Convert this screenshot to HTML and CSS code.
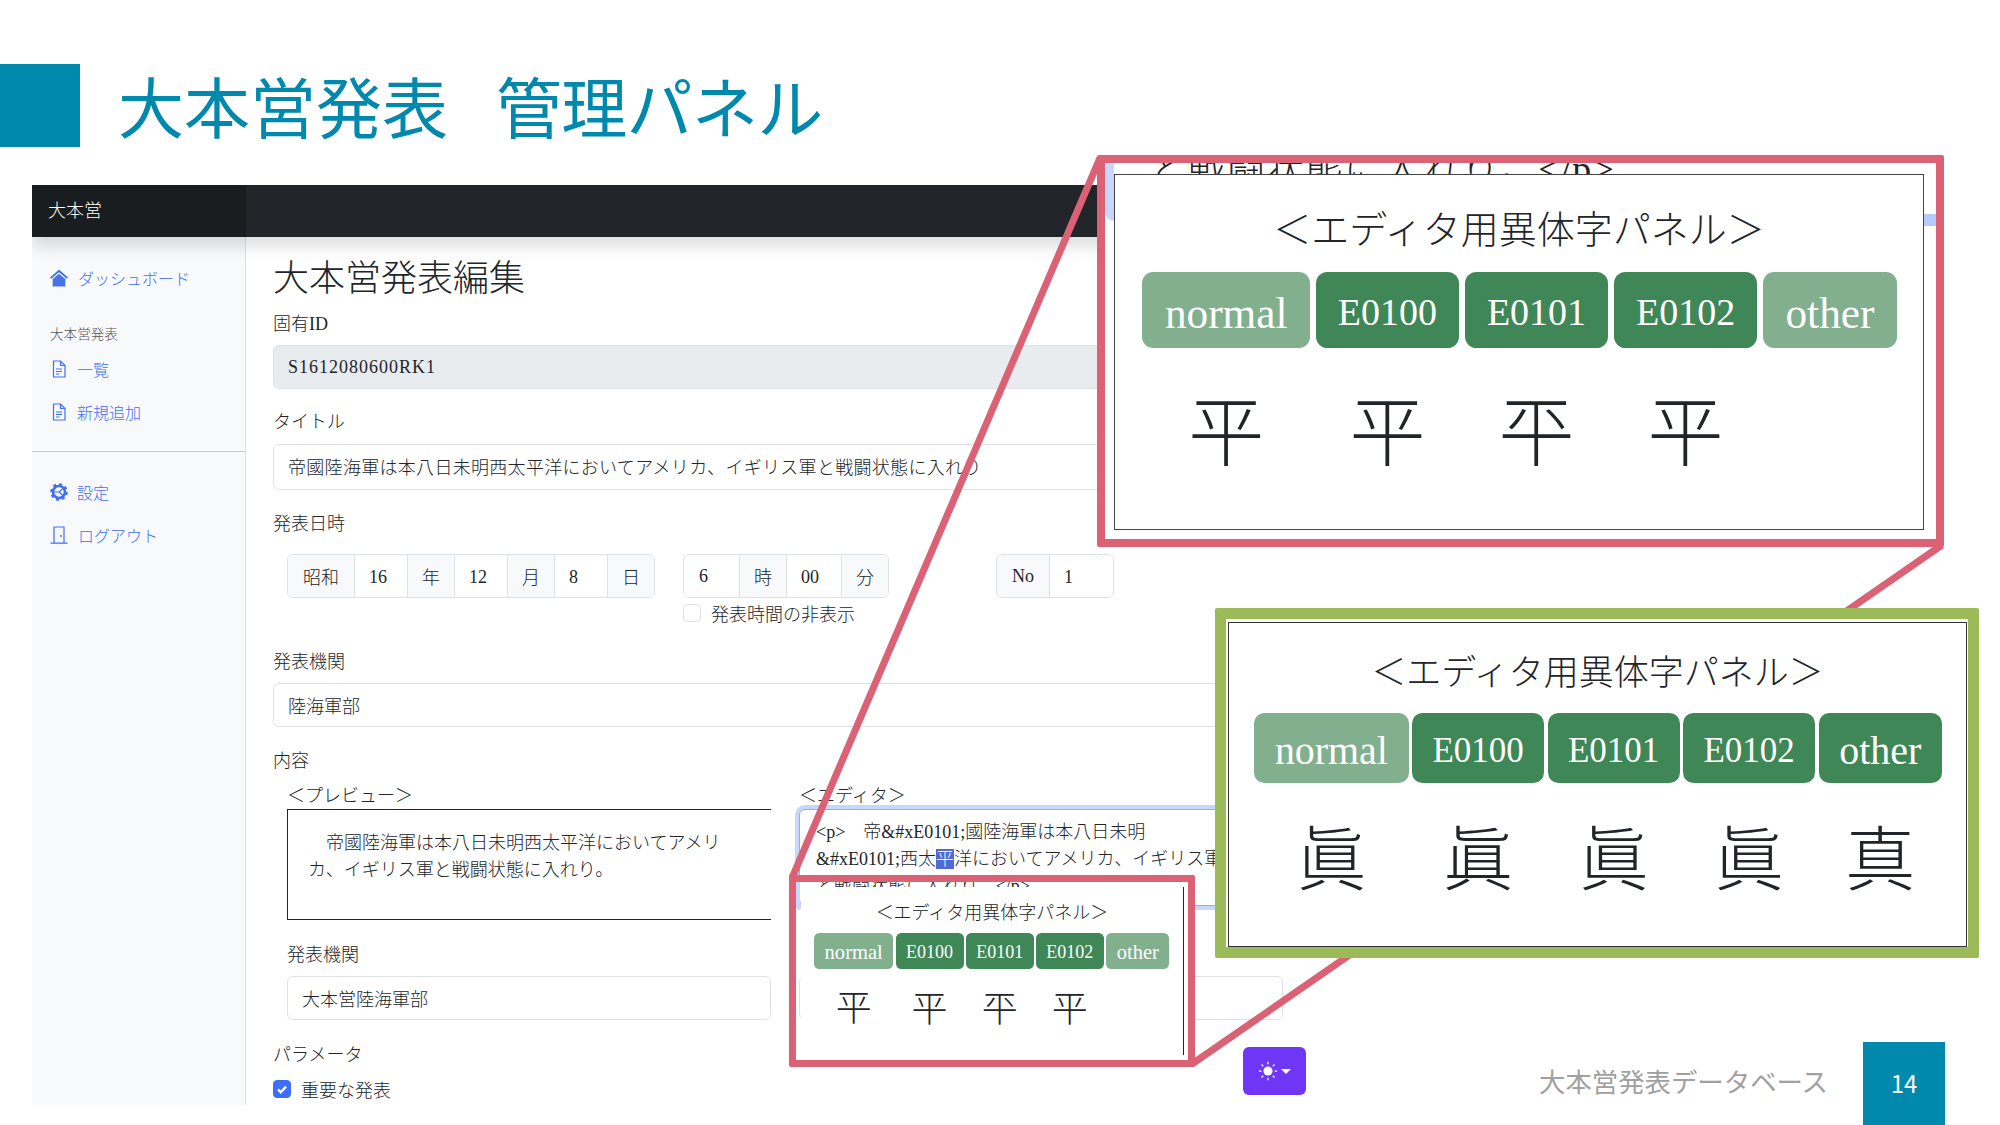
FILE: index.html
```html
<!DOCTYPE html>
<html lang="ja">
<head>
    <meta charset="UTF-8">
    <title>大本営発表 管理パネル</title>
    <link rel="stylesheet" href="styles.css">
</head>
<body>
<div class="slide">
    <header class="slide-head">
        <div class="head-mark"></div>
        <h1 class="slide-title">大本営発表<span class="title-gap">管理パネル</span></h1>
    </header>

    <div class="app">
        <div class="topbar"><div class="brand">大本営</div></div>
        <div class="app-body">
            <nav class="sidebar">
                <a class="nav-link nav-first">
                    <svg class="nav-icon" viewBox="0 0 17 16"><path d="M8.5 0L0 7.5l1.2 1.3 7.3-6.3 7.3 6.3L17 7.5z"/><path d="M8.5 4L2.5 9v7h12V9z"/></svg>
                    <span class="nav-text">ダッシュボード</span>
                </a>
                <div class="nav-heading">大本営発表</div>
                <a class="nav-link">
                    <svg class="nav-icon" viewBox="0 0 17 18"><path class="line" d="M3 1h7l4.500 4.500V17H3z"/><path class="line" d="M10 1v4.500h4.500M5.500 9h6M5.500 11.500h6M5.500 14h3.500"/></svg>
                    <span>一覧</span>
                </a>
                <a class="nav-link">
                    <svg class="nav-icon" viewBox="0 0 17 18"><path class="line" d="M3 1h7l4.500 4.500V17H3z"/><path class="line" d="M10 1v4.500h4.500M5.500 9h6M5.500 11.500h6M5.500 14h3.500"/></svg>
                    <span>新規追加</span>
                </a>
                <hr class="nav-rule">
                <a class="nav-link">
                    <svg class="nav-icon" viewBox="0 0 18 18"><circle class="thick" cx="9" cy="9" r="6"/><circle class="dots" cx="9" cy="9" r="7.800"/><path class="line" d="M9 9l3.500-3M9 9l3.500 3M9 9H4"/></svg>
                    <span>設定</span>
                </a>
                <a class="nav-link">
                    <svg class="nav-icon" viewBox="0 0 17 18"><path class="line" d="M3.500 17V1h10v16M0 17.200h17"/><circle cx="10.500" cy="10" r="1"/></svg>
                    <span class="nav-text">ログアウト</span>
                </a>
            </nav>

            <main class="main">
                <h2 class="page-title">大本営発表編集</h2>

                <div class="field field-id">
                    <label>固有ID</label>
                    <input class="control control-id" type="text" value="S1612080600RK1" disabled>
                </div>
                <div class="field">
                    <label class="label-title">タイトル</label>
                    <input class="control control-tall" type="text" value="帝國陸海軍は本八日未明西太平洋においてアメリカ、イギリス軍と戦闘状態に入れり">
                </div>
                <div class="field field-date">
                    <label class="label-date">発表日時</label>
                    <div class="date-row">
                        <div class="group">
                            <span class="cell cell-text">昭和</span>
                            <span class="cell cell-value">16</span>
                            <span class="cell cell-text">年</span>
                            <span class="cell cell-value">12</span>
                            <span class="cell cell-text">月</span>
                            <span class="cell cell-value">8</span>
                            <span class="cell cell-text">日</span>
                        </div>
                        <div class="time-col">
                            <div class="group">
                                <span class="cell cell-value cell-wide">6</span>
                                <span class="cell cell-text">時</span>
                                <span class="cell cell-value cell-wide">00</span>
                                <span class="cell cell-text">分</span>
                            </div>
                            <div class="check-row">
                                <span class="check"></span>
                                <span>発表時間の非表示</span>
                            </div>
                        </div>
                        <div class="group group-no">
                            <span class="cell cell-text">No</span>
                            <span class="cell cell-value cell-wider">1</span>
                        </div>
                    </div>
                </div>
                <div class="field">
                    <label>発表機関</label>
                    <input class="control" type="text" value="陸海軍部">
                </div>
                <div class="field field-tight">
                    <label>内容</label>
                    <div class="content-row">
                        <div class="content-col">
                            <div class="sub-label">＜プレビュー＞</div>
                            <div class="preview">　帝國陸海軍は本八日未明西太平洋においてアメリカ、イギリス軍と戦闘状態に入れり。</div>
                            <div class="sub-field">
                                <label>発表機関</label>
                                <input class="control" type="text" value="大本営陸海軍部">
                            </div>
                        </div>
                        <div class="content-col">
                            <div class="sub-label">＜エディタ＞</div>
                            <div class="editor">
                                &lt;p&gt;　帝&amp;#xE0101;國陸海軍は本八日未明<br>
                                &amp;#xE0101;西太<span class="selected">平</span>洋においてアメリカ、イギリス軍<br>
                                と戦闘状態に入れり。&lt;/p&gt;
                            </div>
                            <div class="sub-field">
                                <label>&nbsp;</label>
                                <input class="control" type="text">
                            </div>
                        </div>
                    </div>
                </div>
                <div class="field">
                    <label>パラメータ</label>
                    <div class="check-row check-on">
                        <span class="check">
                            <svg viewBox="0 0 20 20"><path d="M5 10.500l3.500 3.500L15 7"/></svg>
                        </span>
                        <span>重要な発表</span>
                    </div>
                </div>
            </main>
        </div>
    </div>

    <svg class="connectors" viewBox="0 0 2000 1125">
        <path d="M792 878L1100 158M1192 1064L1942 545"/>
    </svg>

    <!-- small panel, sits on top of the editor -->
    <div class="callout callout-small">
        <div class="ring-edge"></div>
        <div class="small-cover">
            <div class="vpanel vpanel-small">
                <div class="vpanel-title">＜エディタ用異体字パネル＞</div>
                <div class="variant-row">
                    <div class="variant"><div class="vbtn vbtn-muted vbtn-lower">normal</div><div class="vchar">平</div></div>
                    <div class="variant"><div class="vbtn">E0100</div><div class="vchar">平&#xE0100;</div></div>
                    <div class="variant"><div class="vbtn">E0101</div><div class="vchar">平&#xE0101;</div></div>
                    <div class="variant"><div class="vbtn">E0102</div><div class="vchar">平&#xE0102;</div></div>
                    <div class="variant"><div class="vbtn vbtn-muted vbtn-lower">other</div></div>
                </div>
            </div>
        </div>
    </div>

    <!-- enlarged copy of the small panel -->
    <div class="callout callout-big">
        <div class="big-strip"><div class="big-strip-text">と戦闘状態に入れり。&lt;/p&gt;</div></div>
        <div class="edge-left"></div>
        <div class="edge-right"></div>
        <div class="vpanel vpanel-big">
            <div class="vpanel-title">＜エディタ用異体字パネル＞</div>
            <div class="variant-row">
                <div class="variant"><div class="vbtn vbtn-muted vbtn-lower">normal</div><div class="vchar">平</div></div>
                <div class="variant"><div class="vbtn">E0100</div><div class="vchar">平&#xE0100;</div></div>
                <div class="variant"><div class="vbtn">E0101</div><div class="vchar">平&#xE0101;</div></div>
                <div class="variant"><div class="vbtn">E0102</div><div class="vchar">平&#xE0102;</div></div>
                <div class="variant"><div class="vbtn vbtn-muted vbtn-lower">other</div></div>
            </div>
        </div>
    </div>

    <div class="callout callout-green">
        <div class="vpanel vpanel-green">
            <div class="vpanel-title">＜エディタ用異体字パネル＞</div>
            <div class="variant-row">
                <div class="variant"><div class="vbtn vbtn-muted vbtn-lower">normal</div><div class="vchar">眞</div></div>
                <div class="variant"><div class="vbtn">E0100</div><div class="vchar">眞&#xE0100;</div></div>
                <div class="variant"><div class="vbtn">E0101</div><div class="vchar">眞&#xE0101;</div></div>
                <div class="variant"><div class="vbtn">E0102</div><div class="vchar">眞&#xE0102;</div></div>
                <div class="variant"><div class="vbtn vbtn-lower">other</div><div class="vchar">真</div></div>
            </div>
        </div>
    </div>

    <div class="theme-btn">
        <svg class="sun" viewBox="0 0 24 24"><circle cx="12" cy="12" r="5.500"/><path d="M12 1v3M12 20v3M1 12h3M20 12h3M4.200 4.200l2.100 2.100M17.700 17.700l2.100 2.100M4.200 19.800l2.100-2.100M17.700 6.300l2.100-2.100"/></svg>
        <span class="caret"></span>
    </div>

    <footer class="slide-foot">
        <span class="foot-text">大本営発表データベース</span>
        <span class="page-no">14</span>
    </footer>
</div>
</body>
</html>
```

FILE: styles.css
```css
* {
    box-sizing: border-box;
}
body {
    margin: 0;
    background-color: #fff;
    font-family: "Liberation Serif", "Noto Sans CJK JP", serif;
    font-size: 18px;
    font-weight: 300;
    color: #212529;
}
.slide {
    position: relative;
    width: 2000px;
    height: 1125px;
    overflow: hidden;
}

/* slide header */
.slide-head {
    display: flex;
    padding-top: 64px;
}
.head-mark {
    width: 80px;
    height: 83px;
    background-color: #0088ad;
}
.slide-title {
    margin: 0 0 0 38px;
    font-family: "Noto Sans CJK JP", sans-serif;
    font-size: 66px;
    font-weight: 400;
    line-height: 80px;
    color: #0088ad;
    white-space: nowrap;
}
.title-gap {
    margin-left: 48px;
    letter-spacing: -0.7px;
}

/* screenshot of the app */
.app {
    position: relative;
    z-index: 0;
    display: flex;
    flex-direction: column;
    width: 1903px;
    height: 920px;
    margin: 38px 0 0 32px;
    overflow: hidden;
}
.topbar {
    position: relative;
    z-index: 2;
    height: 52px;
    flex: none;
    background-color: #212529;
    box-shadow: 0 8px 16px rgba(0, 0, 0, 0.15);
}
.brand {
    width: 214px;
    height: 52px;
    padding-left: 16px;
    background-color: #1a1d20;
    color: #fff;
    font-size: 18px;
    line-height: 52px;
}
.app-body {
    display: flex;
    flex: 1;
}
.sidebar {
    width: 214px;
    flex: none;
    padding-top: 19px;
    background-color: #f8f9fa;
    border-right: 1px solid #dee2e6;
    font-size: 16px;
    color: #3f6ff5;
}
.nav-link {
    display: flex;
    align-items: center;
    height: 43px;
    padding-left: 18px;
    gap: 9px;
}
.nav-text {
    margin-left: 1px;
}
.nav-icon {
    width: 18px;
    height: 18px;
    fill: #4674e4;
    flex: none;
}
.nav-icon .line {
    fill: none;
    stroke: #3f6ff5;
    stroke-width: 1.2;
}
.nav-icon .thick {
    fill: none;
    stroke: #3f6ff5;
    stroke-width: 2.6;
}
.nav-icon .dots {
    fill: none;
    stroke: #3f6ff5;
    stroke-width: 2;
    stroke-dasharray: 3 3.1;
}
.nav-heading {
    margin: 26px 0 2px;
    padding-left: 18px;
    height: 20px;
    font-size: 13.6px;
    line-height: 20px;
    color: #555;
}
.nav-rule {
    margin: 18px 0 18px;
    border: 0;
    border-top: 1px solid #c8c9cf;
}

/* form */
.main {
    width: 1051px;
    flex: none;
    padding: 21px 14px 0 27px;
}
.page-title {
    margin: 0 0 9px;
    font-size: 36px;
    font-weight: 300;
    line-height: 43px;
}
label {
    display: block;
    height: 27px;
    margin-bottom: 8px;
    padding-top: 1px;
    line-height: 27px;
}
.field {
    margin-bottom: 20px;
}
.field-id {
    margin-bottom: 19px;
}
.label-title {
    margin-bottom: 9px;
}
.control {
    display: block;
    width: 100%;
    height: 44px;
    padding: 0 14px;
    background-color: #fff;
    border: 1px solid #dee2e6;
    border-radius: 6px;
    font-family: inherit;
    font-size: 18px;
    font-weight: 300;
    color: #212529;
}
.control-id {
    background-color: #e9ecef;
    letter-spacing: 1px;
}
.control-tall {
    height: 46px;
    padding-bottom: 3px;
    letter-spacing: 0.3px;
}
.label-date {
    margin-bottom: 17px;
}
.field-date {
    margin-bottom: 0;
    height: 138px;
}
.date-row {
    display: flex;
    align-items: flex-start;
    padding-left: 14px;
}
.group {
    display: flex;
    height: 44px;
    border: 1px solid #dee2e6;
    border-radius: 6px;
    overflow: hidden;
}
.cell {
    display: flex;
    align-items: center;
    padding: 0 14px;
    border-left: 1px solid #dee2e6;
}
.cell:first-child {
    border-left: 0;
    padding: 0 15px;
}
.cell-text {
    background-color: #f8f9fa;
}
.cell-value {
    width: 53px;
    padding-top: 2px;
    background-color: #fff;
}
.cell-wide {
    width: 55px;
}
.cell-wider {
    width: 64px;
}
.time-col {
    margin-left: 28px;
}
.group-no {
    margin-left: 107px;
}
.check-row {
    display: flex;
    align-items: center;
    gap: 10px;
    height: 20px;
    margin-top: 5px;
}
.check {
    display: block;
    width: 18px;
    height: 18px;
    background-color: #fff;
    border: 1px solid #dee2e6;
    border-radius: 4px;
}
.check-on {
    margin-top: 11px;
}
.check-on .check {
    background-color: #3d6ef7;
    border-color: #3d6ef7;
}
.check-on svg {
    display: block;
    fill: none;
    stroke: #fff;
    stroke-width: 3;
}
.field-tight {
    margin-bottom: 21px;
}
.field-tight > label {
    margin-bottom: 9px;
}
.content-row {
    display: flex;
    gap: 28px;
    padding-left: 14px;
}
.content-col {
    width: 484px;
}
.sub-label {
    height: 26px;
    line-height: 26px;
}
.preview {
    height: 111px;
    padding: 20px 42px 0 20px;
    border: 1px solid #212529;
    border-right: 0;
    line-height: 27px;
}
.editor {
    height: 97px;
    padding: 9px 16px 0;
    margin-bottom: 0;
    background-color: #fff;
    border: 1px solid #90aef7;
    border-radius: 6px;
    box-shadow: 0 0 0 4px #c7d7fb;
    line-height: 27px;
    white-space: nowrap;
    overflow: hidden;
}
.selected {
    background-color: #5069d6;
    color: #fff;
}
.sub-field {
    margin-top: 21px;
}
.content-col:last-child .sub-field {
    margin-top: 35px;
}

/* callouts over the screenshot */
.connectors {
    position: absolute;
    left: 0;
    top: 0;
    width: 2000px;
    height: 1125px;
}
.connectors path {
    fill: none;
    stroke: #db6174;
    stroke-width: 7;
}
.callout {
    position: absolute;
    border-radius: 2px;
}
.callout-small {
    left: 789px;
    top: 875px;
    width: 406px;
    height: 192px;
    border: 7px solid #db6174;
}
.ring-edge {
    position: absolute;
    left: 0;
    top: 0;
    width: 4px;
    height: 28px;
    background-color: #c7d7fb;
    border-bottom-left-radius: 4px;
}
.small-cover {
    position: absolute;
    left: 5px;
    top: 5px;
    right: 0;
    bottom: 0;
    background-color: #fff;
}
.callout-big {
    left: 1097px;
    top: 155px;
    width: 847px;
    height: 392px;
    padding: 0 12px 9px 9px;
    background-color: #fff;
    border: 8px solid #db6174;
}
.big-strip {
    height: 11px;
    overflow: hidden;
}
.big-strip-text {
    margin: -13px 0 0 35px;
    font-size: 38px;
    letter-spacing: 1px;
    line-height: 38px;
    white-space: nowrap;
}
.edge-left {
    position: absolute;
    left: 0;
    top: 0;
    width: 9px;
    height: 58px;
    background-color: #c7d7fb;
    border-bottom-left-radius: 9px;
}
.edge-right {
    position: absolute;
    right: 0;
    top: 51px;
    width: 12px;
    height: 12px;
    background-color: #b5cafa;
}
.callout-green {
    left: 1215px;
    top: 608px;
    width: 764px;
    height: 350px;
    padding: 3px 1px 0 2px;
    background-color: #fff;
    border: 11px solid #9bbb59;
}

/* variant panel, sized in em so it scales with the zoom */
.vpanel {
    height: 100%;
    background-color: #fff;
    padding-left: 0.72em;
}
.vpanel-small {
    width: 383px;
    height: 168px;
    font-size: 18px;
    border-right: 1px solid #212529;
}
.vpanel-small .variant-row {
    gap: 2.25px;
}
.vpanel-big {
    height: 356px;
    margin-left: 0;
    font-size: 38px;
    border: 1px solid #444;
}
.vpanel-big .variant-row {
    gap: 5.75px;
}
.vpanel-green {
    font-size: 35px;
    border: 1px solid #333;
}
.vpanel-green .variant-row {
    gap: 3.5px;
}
.vpanel-title {
    padding: 0.7em 0.72em 0.36em 0;
    line-height: 1.5;
    text-align: center;
}
.variant-row {
    display: flex;
}
.variant {
    display: flex;
    flex-direction: column;
    align-items: center;
}
.vbtn {
    height: 2em;
    padding: 0 0.58em;
    background-color: #3f8757;
    border-radius: 0.3em;
    color: #fff;
    line-height: 2.15em;
    white-space: nowrap;
}
.vbtn-muted {
    background-color: #82b08f;
}
.vbtn-lower {
    height: 1.754em;
    padding: 0 0.52em;
    border-radius: 0.26em;
    font-size: 1.14em;
    line-height: 1.9em;
}
.vchar {
    margin-top: 0.54em;
    font-size: 2em;
    line-height: 1.2;
}

/* bottom of the slide */
.theme-btn {
    position: absolute;
    left: 1243px;
    top: 1047px;
    display: flex;
    align-items: center;
    justify-content: center;
    gap: 3px;
    width: 63px;
    height: 48px;
    background-color: #6f36f5;
    border-radius: 6px;
}
.sun {
    width: 20px;
    height: 20px;
    fill: #fff;
}
.sun path {
    fill: none;
    stroke: #fff;
    stroke-width: 1.5;
}
.caret {
    width: 0;
    height: 0;
    border-left: 5px solid transparent;
    border-right: 5px solid transparent;
    border-top: 5px solid #fff;
}
.slide-foot {
    position: absolute;
    right: 55px;
    bottom: 0;
    display: flex;
    align-items: center;
    gap: 35px;
    font-family: "Noto Sans CJK JP", sans-serif;
    font-weight: 400;
}
.foot-text {
    margin-bottom: 6px;
    font-size: 26.4px;
    color: #a0a0a0;
    white-space: nowrap;
}
.page-no {
    width: 82px;
    height: 83px;
    background-color: #0088ad;
    color: #fff;
    font-size: 24px;
    line-height: 81px;
    text-align: center;
}
```
